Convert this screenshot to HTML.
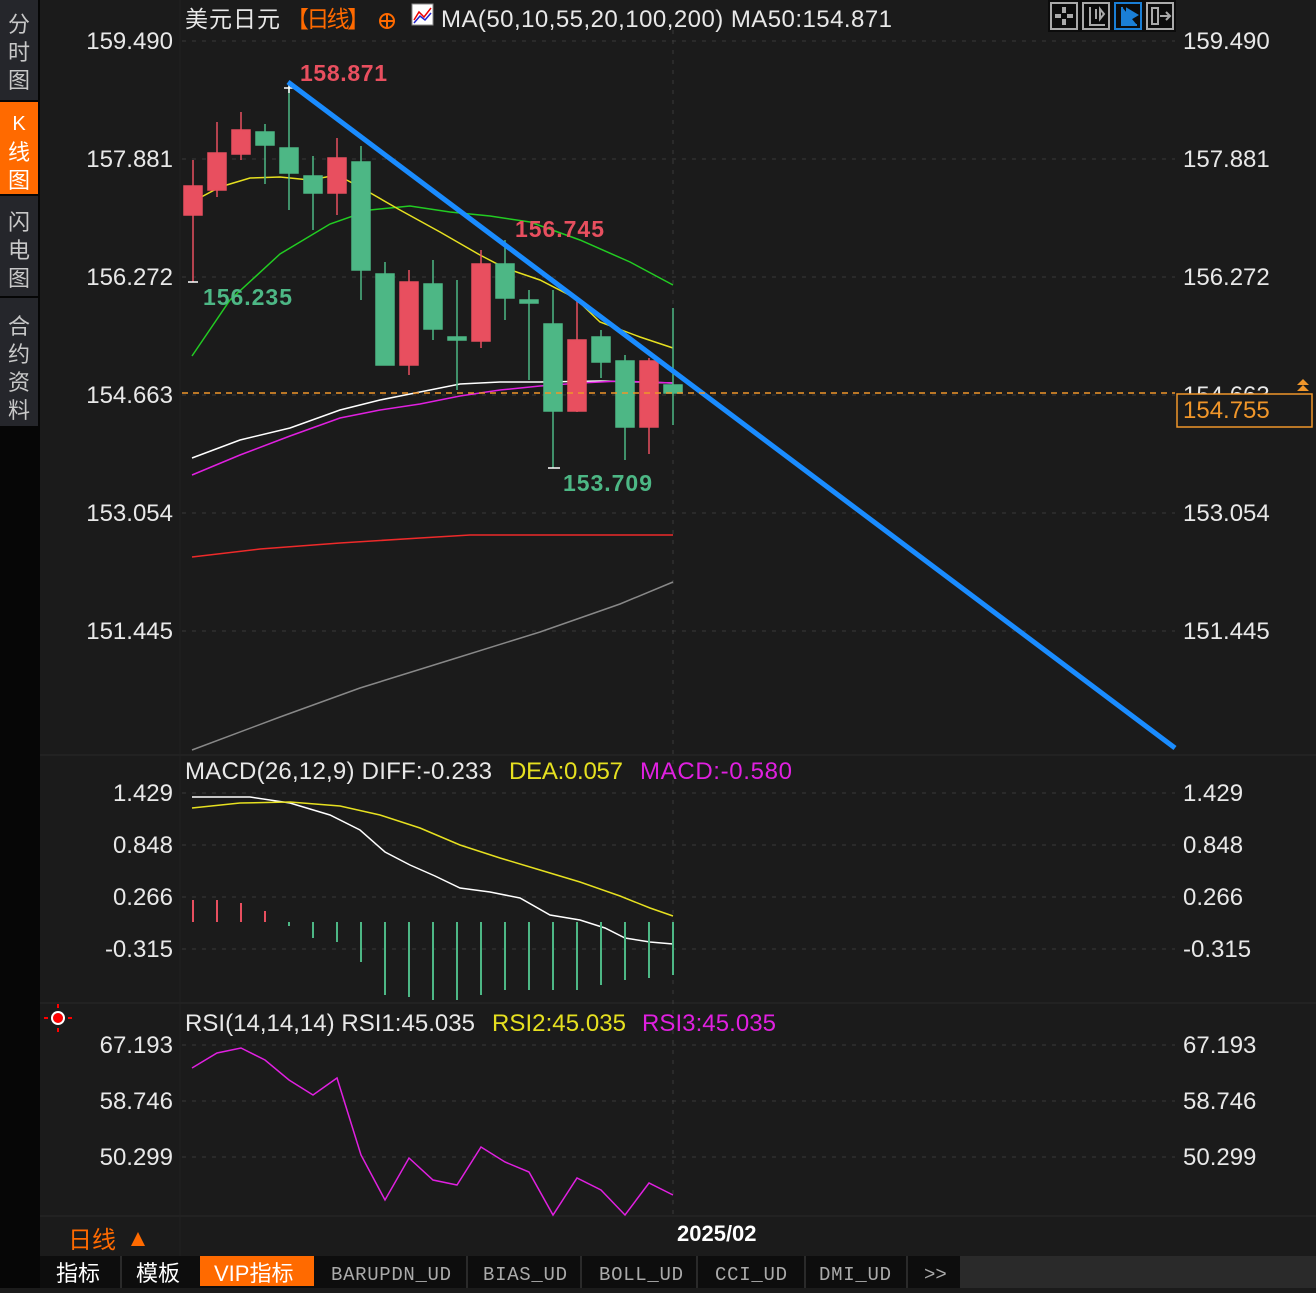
<!DOCTYPE html>
<html><head><meta charset="utf-8"><style>
body{margin:0;width:1316px;height:1288px;background:#1b1b1b;overflow:hidden;font-family:"Liberation Sans","Noto Sans CJK SC",sans-serif;}
svg text{font-family:"Liberation Sans","Noto Sans CJK SC",sans-serif;}
svg text.m{font-family:"Liberation Mono",monospace;}
</style></head><body>
<svg width="1316" height="1288" xmlns="http://www.w3.org/2000/svg">
<rect width="1316" height="1288" fill="#1b1b1b"/>
<rect x="0" y="0" width="40" height="1288" fill="#060606"/>
<rect x="0" y="0" width="38" height="100" fill="#25262b"/>
<rect x="0" y="102" width="38" height="92" fill="#ff6a00"/>
<rect x="0" y="196" width="38" height="100" fill="#25262b"/>
<rect x="0" y="298" width="38" height="128" fill="#25262b"/>
<g fill="#c8c8c8" font-size="22" text-anchor="middle">
<text x="19" y="32">分</text><text x="19" y="60">时</text><text x="19" y="88">图</text>
<text x="19" y="230">闪</text><text x="19" y="258">电</text><text x="19" y="286">图</text>
<text x="19" y="334">合</text><text x="19" y="362">约</text><text x="19" y="390">资</text><text x="19" y="418">料</text>
</g>
<g fill="#fff" font-size="22" text-anchor="middle">
<text x="19" y="130" font-size="20">K</text><text x="19" y="160">线</text><text x="19" y="188">图</text>
</g>
<line x1="40" y1="755" x2="1316" y2="755" stroke="#2a2a2a"/>
<line x1="40" y1="1003" x2="1316" y2="1003" stroke="#2a2a2a"/>
<line x1="40" y1="1216" x2="1316" y2="1216" stroke="#2a2a2a"/>
<line x1="180" y1="0" x2="180" y2="1256" stroke="#222"/>
<g stroke="#3a3a3a" stroke-dasharray="4,6">
<line x1="182" y1="41" x2="1175" y2="41"/><line x1="182" y1="159" x2="1175" y2="159"/>
<line x1="182" y1="277" x2="1175" y2="277"/><line x1="182" y1="395" x2="1175" y2="395"/>
<line x1="182" y1="513" x2="1175" y2="513"/><line x1="182" y1="631" x2="1175" y2="631"/>
<line x1="182" y1="793" x2="1175" y2="793"/><line x1="182" y1="845" x2="1175" y2="845"/>
<line x1="182" y1="897" x2="1175" y2="897"/><line x1="182" y1="949" x2="1175" y2="949"/>
<line x1="182" y1="1045" x2="1175" y2="1045"/><line x1="182" y1="1101" x2="1175" y2="1101"/>
<line x1="182" y1="1157" x2="1175" y2="1157"/>
<line x1="673" y1="30" x2="673" y2="1220"/>
</g>
<g fill="#e8e8e8" font-size="24">
<g text-anchor="end">
<text x="173" y="49">159.490</text><text x="173" y="167">157.881</text><text x="173" y="285">156.272</text>
<text x="173" y="403">154.663</text><text x="173" y="521">153.054</text><text x="173" y="639">151.445</text>
<text x="173" y="801">1.429</text><text x="173" y="853">0.848</text><text x="173" y="905">0.266</text><text x="173" y="957">-0.315</text>
<text x="173" y="1053">67.193</text><text x="173" y="1109">58.746</text><text x="173" y="1165">50.299</text>
</g>
<text x="1183" y="49">159.490</text><text x="1183" y="167">157.881</text><text x="1183" y="285">156.272</text>
<text x="1183" y="403">154.663</text><text x="1183" y="521">153.054</text><text x="1183" y="639">151.445</text>
<text x="1183" y="801">1.429</text><text x="1183" y="853">0.848</text><text x="1183" y="905">0.266</text><text x="1183" y="957">-0.315</text>
<text x="1183" y="1053">67.193</text><text x="1183" y="1109">58.746</text><text x="1183" y="1165">50.299</text>
</g>
<text x="185" y="27" font-size="23" fill="#e8e8e8" textLength="95">美元日元</text>
<text x="286" y="27" font-size="23" fill="#ff6a00" textLength="84">【日线】</text>
<circle cx="387" cy="21" r="7" fill="none" stroke="#ff6a00" stroke-width="2"/><line x1="380" y1="21" x2="394" y2="21" stroke="#ff6a00" stroke-width="2"/><line x1="387" y1="14" x2="387" y2="28" stroke="#ff6a00" stroke-width="2"/>
<rect x="412" y="4" width="21" height="21" fill="#fff" stroke="#888"/><polyline points="414,20 419,12 424,17 431,8" stroke="#e00" fill="none" stroke-width="1.5"/><polyline points="414,23 420,16 425,20 431,13" stroke="#22c" fill="none" stroke-width="1.5"/>
<text x="441" y="27" font-size="24" fill="#e8e8e8" textLength="451">MA(50,10,55,20,100,200)  MA50:154.871</text>
<rect x="1048" y="0" width="128" height="32" fill="#0c0c0c"/>
<g fill="none" stroke="#aaa" stroke-width="2">
<rect x="1051" y="3" width="26" height="26"/><rect x="1083" y="3" width="26" height="26"/><rect x="1147" y="3" width="26" height="26"/>
</g>
<rect x="1115" y="3" width="26" height="26" fill="none" stroke="#1a7fd6" stroke-width="2"/>
<g fill="#aaa"><rect x="1062" y="7" width="4" height="6"/><rect x="1062" y="19" width="4" height="6"/><rect x="1055" y="14" width="6" height="4"/><rect x="1067" y="14" width="6" height="4"/></g>
<path d="M1090 7V25H1105M1096 9v10M1100 9v10l4-5z" stroke="#aaa" fill="none" stroke-width="2"/>
<path d="M1122 7V25H1137M1127 9v12l10-6z" stroke="#1a7fd6" fill="#1a7fd6" stroke-width="2"/>
<path d="M1152 8h6v16h-6zM1160 16h10M1166 12l4 4-4 4" stroke="#aaa" fill="none" stroke-width="2"/>
<polyline fill="none" stroke="#fff" stroke-width="1.5" points="192,458 240,440 290,428 340,410 380,400 420,392 460,384 500,382 540,382 600,381 640,382 673,383"/>
<polyline fill="none" stroke="#e020e0" stroke-width="1.5" points="192,475 240,455 290,436 340,418 380,410 420,404 460,396 500,390 540,386 580,383 620,381 673,383"/>
<polyline fill="none" stroke="#ee2a2a" stroke-width="1.5" points="192,557 260,549 340,543 420,538 470,535 673,535"/>
<polyline fill="none" stroke="#888" stroke-width="1.5" points="192,750 280,717 360,688 450,660 540,632 620,604 673,582"/>
<polyline fill="none" stroke="#22cc22" stroke-width="1.5" points="192,356 230,300 280,254 330,224 370,210 410,206 450,212 490,216 530,222 580,240 630,262 673,285"/>
<polyline fill="none" stroke="#e6e020" stroke-width="1.5" points="192,202 220,187 250,178 280,177 310,180 337,175 360,187 400,210 440,232 480,255 505,268 540,280 575,298 600,322 640,337 673,348"/>
<g stroke-width="1.5">
<g stroke="#e84f5f" fill="#e84f5f">
<line x1="193" y1="160" x2="193" y2="282"/><rect x="184" y="186" width="18" height="29"/>
<line x1="217" y1="122" x2="217" y2="197"/><rect x="208" y="153" width="18" height="37"/>
<line x1="241" y1="112" x2="241" y2="160"/><rect x="232" y="130" width="18" height="24"/>
<line x1="337" y1="138" x2="337" y2="215"/><rect x="328" y="158" width="18" height="35"/>
<line x1="409" y1="270" x2="409" y2="375"/><rect x="400" y="282" width="18" height="83"/>
<line x1="481" y1="250" x2="481" y2="348"/><rect x="472" y="264" width="18" height="77"/>
<line x1="577" y1="300" x2="577" y2="412"/><rect x="568" y="340" width="18" height="71"/>
<line x1="649" y1="358" x2="649" y2="454"/><rect x="640" y="361" width="18" height="66"/>
</g>
<g stroke="#4db785" fill="#4db785">
<line x1="265" y1="124" x2="265" y2="184"/><rect x="256" y="132" width="18" height="13"/>
<line x1="289" y1="86" x2="289" y2="210"/><rect x="280" y="148" width="18" height="25"/>
<line x1="313" y1="156" x2="313" y2="230"/><rect x="304" y="176" width="18" height="17"/>
<line x1="361" y1="146" x2="361" y2="300"/><rect x="352" y="162" width="18" height="108"/>
<line x1="385" y1="262" x2="385" y2="365"/><rect x="376" y="274" width="18" height="91"/>
<line x1="433" y1="260" x2="433" y2="340"/><rect x="424" y="284" width="18" height="45"/>
<line x1="457" y1="280" x2="457" y2="390"/><rect x="448" y="337" width="18" height="3"/>
<line x1="505" y1="240" x2="505" y2="320"/><rect x="496" y="264" width="18" height="34"/>
<line x1="529" y1="290" x2="529" y2="380"/><rect x="520" y="300" width="18" height="3"/>
<line x1="553" y1="290" x2="553" y2="468"/><rect x="544" y="324" width="18" height="87"/>
<line x1="601" y1="330" x2="601" y2="378"/><rect x="592" y="337" width="18" height="25"/>
<line x1="625" y1="355" x2="625" y2="460"/><rect x="616" y="361" width="18" height="66"/>
<line x1="673" y1="308" x2="673" y2="425"/><rect x="664" y="385" width="18" height="8"/>
</g>
</g>
<path d="M284 88h10M289 83v10M188 282h10M548 468h12" stroke="#fff" stroke-width="1.5"/>
<text x="300" y="81" font-size="23" fill="#e84f5f" font-weight="bold" textLength="87">158.871</text>
<text x="515" y="237" font-size="23" fill="#e84f5f" font-weight="bold" textLength="89">156.745</text>
<text x="203" y="305" font-size="23" fill="#4db785" font-weight="bold" textLength="89">156.235</text>
<text x="563" y="491" font-size="23" fill="#4db785" font-weight="bold" textLength="89">153.709</text>
<line x1="288" y1="82" x2="1175" y2="748" stroke="#1a8cff" stroke-width="5"/>
<line x1="182" y1="393" x2="1175" y2="393" stroke="#f0962a" stroke-width="1.5" stroke-dasharray="6,5"/>
<rect x="1177" y="394" width="135" height="33" fill="#1b1b1b" stroke="#f0962a" stroke-width="1.5"/>
<text x="1183" y="418" font-size="24" fill="#f0962a">154.755</text>
<path d="M1297 385l6-6 6 6zM1297 391l6-6 6 6z" fill="#f0962a"/>
<text x="185" y="779" font-size="24" fill="#e8e8e8" textLength="307">MACD(26,12,9) DIFF:-0.233</text>
<text x="509" y="779" font-size="24" fill="#e6e020" textLength="114">DEA:0.057</text>
<text x="640" y="779" font-size="24" fill="#e020e0" textLength="152">MACD:-0.580</text>
<polyline fill="none" stroke="#fff" stroke-width="1.5" points="192,797 250,797 290,803 330,815 360,830 385,852 410,865 435,876 460,888 490,892 520,898 550,915 580,920 605,928 625,938 650,942 673,944"/>
<polyline fill="none" stroke="#e6e020" stroke-width="1.5" points="192,808 240,803 290,802 340,806 380,815 420,828 460,845 500,858 540,870 580,882 620,896 650,908 673,916"/>
<g stroke-width="2">
<g stroke="#e84f5f"><line x1="193" y1="900" x2="193" y2="922"/><line x1="217" y1="900" x2="217" y2="922"/><line x1="241" y1="903" x2="241" y2="922"/><line x1="265" y1="911" x2="265" y2="922"/></g>
<g stroke="#4db785"><line x1="289" y1="922" x2="289" y2="926"/><line x1="313" y1="922" x2="313" y2="938"/><line x1="337" y1="922" x2="337" y2="942"/><line x1="361" y1="922" x2="361" y2="962"/><line x1="385" y1="922" x2="385" y2="995"/><line x1="409" y1="922" x2="409" y2="997"/><line x1="433" y1="922" x2="433" y2="1000"/><line x1="457" y1="922" x2="457" y2="1000"/><line x1="481" y1="922" x2="481" y2="995"/><line x1="505" y1="922" x2="505" y2="990"/><line x1="529" y1="922" x2="529" y2="990"/><line x1="553" y1="922" x2="553" y2="990"/><line x1="577" y1="922" x2="577" y2="990"/><line x1="601" y1="922" x2="601" y2="985"/><line x1="625" y1="922" x2="625" y2="980"/><line x1="649" y1="922" x2="649" y2="978"/><line x1="673" y1="922" x2="673" y2="975"/></g>
</g>
<circle cx="58" cy="1018" r="5" fill="#f00"/><circle cx="58" cy="1018" r="6" fill="none" stroke="#fff" stroke-width="2"/>
<g stroke="#f00" stroke-width="2"><line x1="58" y1="1004" x2="58" y2="1008"/><line x1="58" y1="1028" x2="58" y2="1032"/><line x1="44" y1="1018" x2="48" y2="1018"/><line x1="68" y1="1018" x2="72" y2="1018"/></g>
<text x="185" y="1031" font-size="24" fill="#e8e8e8" textLength="290">RSI(14,14,14) RSI1:45.035</text>
<text x="492" y="1031" font-size="24" fill="#e6e020" textLength="134">RSI2:45.035</text>
<text x="642" y="1031" font-size="24" fill="#e020e0" textLength="134">RSI3:45.035</text>
<polyline fill="none" stroke="#e020e0" stroke-width="1.5" points="192,1068 217,1053 241,1048 265,1060 289,1080 313,1095 337,1078 361,1155 385,1200 409,1158 433,1180 457,1185 481,1147 505,1162 529,1172 553,1215 577,1178 601,1190 625,1215 649,1183 673,1195"/>
<text x="68" y="1248" font-size="24" fill="#ff6a00">日线</text>
<path d="M131 1246l7-14 7 14z" fill="#ff6a00"/>
<text x="677" y="1241" font-size="22" fill="#fff" font-weight="bold">2025/02</text>
<rect x="40" y="1256" width="1276" height="32" fill="#0d0d0d"/>
<rect x="200" y="1256" width="114" height="30" fill="#ff6a00"/>
<g fill="#2a2a2a"><rect x="120" y="1256" width="2" height="32"/><rect x="466" y="1256" width="2" height="32"/><rect x="580" y="1256" width="2" height="32"/><rect x="696" y="1256" width="2" height="32"/><rect x="804" y="1256" width="2" height="32"/><rect x="906" y="1256" width="2" height="32"/><rect x="960" y="1256" width="356" height="32"/></g>
<g font-size="22" fill="#fff"><text x="56" y="1281">指标</text><text x="136" y="1281">模板</text><text x="214" y="1281">VIP指标</text></g>
<g font-size="19" fill="#aaa"><text class="m" x="331" y="1280" textLength="120">BARUPDN_UD</text><text class="m" x="483" y="1280" textLength="84">BIAS_UD</text><text class="m" x="599" y="1280" textLength="84">BOLL_UD</text><text class="m" x="715" y="1280" textLength="72">CCI_UD</text><text class="m" x="819" y="1280" textLength="72">DMI_UD</text><text class="m" x="924" y="1280">&gt;&gt;</text></g>
</svg>
</body></html>
